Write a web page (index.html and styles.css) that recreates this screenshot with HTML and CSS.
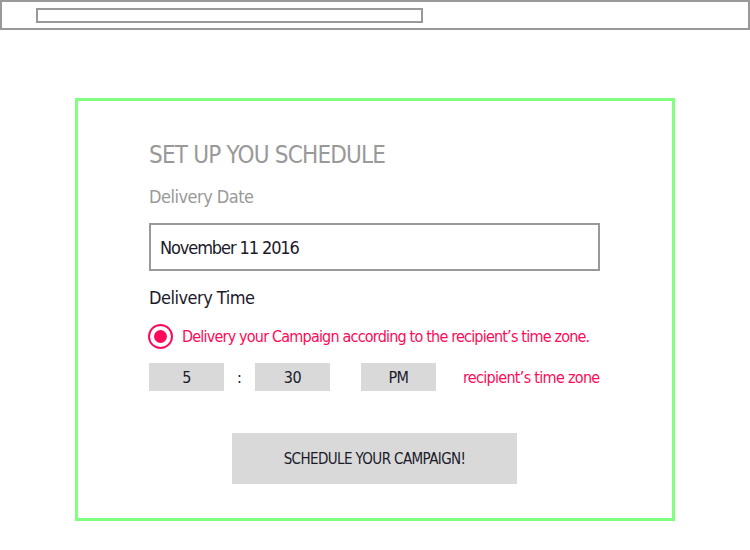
FILE: index.html
```html
<!DOCTYPE html>
<html>
<head>
<meta charset="utf-8">
<link rel="stylesheet" href="styles.css">
</head>
<body>
<header class="topbar"><div class="search"></div></header>
<main class="panel">
  <h1 class="title">SET UP YOU SCHEDULE</h1>
  <div class="label muted">Delivery Date</div>
  <div class="date-input">November 11 2016</div>
  <div class="label dark">Delivery Time</div>
  <div class="radio-row">
    <span class="radio"><span class="dot"></span></span>
    <span class="radio-text">Delivery your Campaign according to the recipient’s time zone.</span>
  </div>
  <div class="time-row">
    <div class="tbox">5</div>
    <div class="colon">:</div>
    <div class="tbox">30</div>
    <div class="tbox pm">PM</div>
    <div class="tz">recipient’s time zone</div>
  </div>
  <div class="btn-row"><div class="btn">SCHEDULE YOUR CAMPAIGN!</div></div>
</main>
</body>
</html>
```
FILE: styles.css
```css
* { box-sizing: border-box; }
body {
  margin: 0;
  background: #fff;
  font-family: "DejaVu Sans Condensed", "DejaVu Sans", sans-serif;
  font-stretch: condensed;
}
.topbar {
  height: 30px;
  width: 750px;
  border: 2px solid #999;
  padding: 6px 0 0 34px;
}
.search {
  width: 387px;
  height: 15px;
  border: 2px solid #999;
}
.panel {
  margin: 68px 0 0 75px;
  width: 600px;
  height: 423px;
  border: 3px solid #80ff80;
  padding: 39px 0 0 71px;
  display: flex;
  flex-direction: column;
  align-items: flex-start;
}
.title {
  margin: 0;
  font-weight: normal;
  font-size: 24px;
  letter-spacing: -0.8px;
  line-height: 30px;
  color: #999;
}
.label {
  font-size: 18px;
  letter-spacing: -0.5px;
  line-height: 24px;
}
.muted { color: #999; margin-top: 15px; }
.dark { color: #1a1a2a; margin-top: 15px; }
.date-input {
  margin-top: 14px;
  width: 451px;
  height: 48px;
  border: 2px solid #999;
  padding-left: 9px;
  display: flex;
  align-items: center;
  font-size: 18px;
  letter-spacing: -1.1px;
  color: #1a1a2a;
}
.radio-row {
  margin-top: 14px;
  display: flex;
  align-items: center;
  gap: 9px;
  margin-left: -1px;
}
.radio {
  width: 25px;
  height: 25px;
  border: 2px solid #ff0a5a;
  border-radius: 50%;
  display: flex;
  align-items: center;
  justify-content: center;
}
.dot {
  width: 13px;
  height: 13px;
  border-radius: 50%;
  background: #ff0a5a;
}
.radio-text {
  color: #ff0a5a;
  font-size: 16px;
  letter-spacing: -0.8px;
}
.time-row {
  margin-top: 14px;
  display: flex;
  align-items: center;
}
.tbox {
  width: 75px;
  height: 28px;
  background: #d9d9d9;
  color: #1a1a2a;
  font-size: 16px;
  letter-spacing: -0.5px;
  display: flex;
  align-items: center;
  justify-content: center;
}
.colon {
  width: 31px;
  text-align: center;
  font-size: 16px;
  color: #1a1a2a;
}
.pm { margin-left: 31px; }
.tz {
  margin-left: 27px;
  color: #ff0a5a;
  font-size: 16px;
  letter-spacing: -0.7px;
}
.btn-row {
  margin-top: 42px;
  margin-left: 83px;
}
.btn {
  width: 285px;
  height: 51px;
  background: #d9d9d9;
  color: #1a1a2a;
  font-size: 15px;
  letter-spacing: -0.6px;
  display: flex;
  align-items: center;
  justify-content: center;
}
```
